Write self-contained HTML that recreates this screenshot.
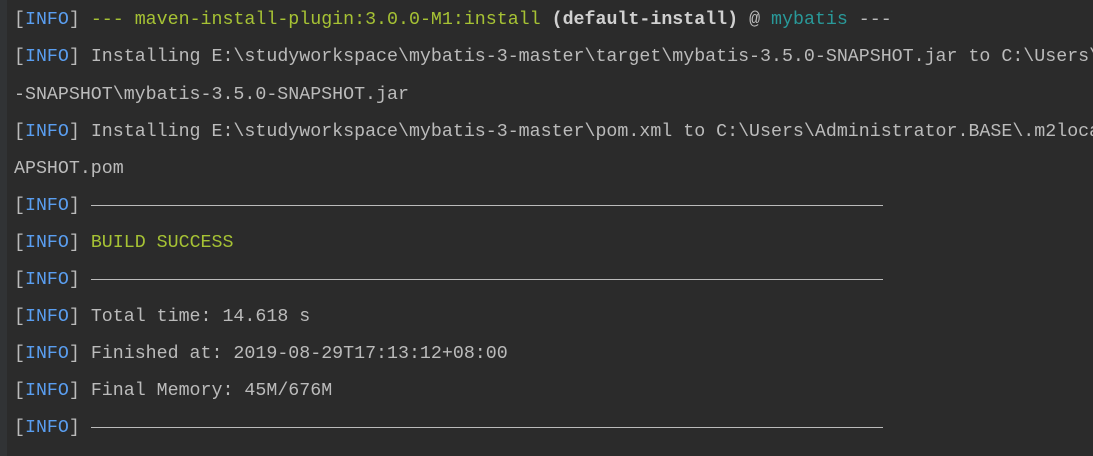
<!DOCTYPE html><html><head><style>
body{margin:0;width:1093px;height:456px;background:#2b2b2b;overflow:hidden;position:relative;font-family:"Liberation Mono","Noto Sans CJK SC",monospace;font-size:18.3px;color:#bbbbbb}
.strip{position:absolute;left:0;top:0;width:7px;height:456px;background:#313335}
.l{position:absolute;left:14px;right:0;overflow:hidden;white-space:pre;line-height:20px}
.i{color:#5a9ef0}.g{color:#a6c234}.t{color:#299999}.b{font-weight:bold;color:#d0d0d0}
.d{display:inline-block;width:792px;height:1px;background:#bbbbbb;vertical-align:middle;margin-left:0}
</style></head><body><div class="strip"></div>
<div class="l" style="top:10px">[<span class="i">INFO</span>] <span class="g">--- maven-install-plugin:3.0.0-M1:install</span> <span class="b">(default-install)</span> @ <span class="t">mybatis</span> ---</div>
<div class="l" style="top:47px">[<span class="i">INFO</span>] Installing E:\studyworkspace\mybatis-3-master\target\mybatis-3.5.0-SNAPSHOT.jar to C:\Users\Administrator</div>
<div class="l" style="top:85px">-SNAPSHOT\mybatis-3.5.0-SNAPSHOT.jar</div>
<div class="l" style="top:122px">[<span class="i">INFO</span>] Installing E:\studyworkspace\mybatis-3-master\pom.xml to C:\Users\Administrator.BASE\.m2local</div>
<div class="l" style="top:159px">APSHOT.pom</div>
<div class="l" style="top:196px">[<span class="i">INFO</span>] <span class="d"></span></div>
<div class="l" style="top:233px">[<span class="i">INFO</span>] <span class="g">BUILD SUCCESS</span></div>
<div class="l" style="top:270px">[<span class="i">INFO</span>] <span class="d"></span></div>
<div class="l" style="top:307px">[<span class="i">INFO</span>] Total time: 14.618 s</div>
<div class="l" style="top:344px">[<span class="i">INFO</span>] Finished at: 2019-08-29T17:13:12+08:00</div>
<div class="l" style="top:381px">[<span class="i">INFO</span>] Final Memory: 45M/676M</div>
<div class="l" style="top:418px">[<span class="i">INFO</span>] <span class="d"></span></div>
</body></html>
